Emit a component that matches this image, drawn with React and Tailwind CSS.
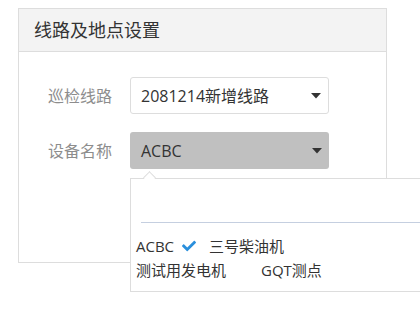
import React from "react";
import { FaCheck } from "react-icons/fa";

const font = { fontFamily: '"Open Sans", "Noto Sans CJK SC", sans-serif' };

const Caret = () => (
  <svg width="10" height="6" viewBox="0 0 10 6" className="shrink-0">
    <path d="M0 0 L10 0 L5 5.5 Z" fill="#333" />
  </svg>
);

const devices = [
  [
    { name: "ACBC", checked: true },
    { name: "三号柴油机", checked: false },
  ],
  [
    { name: "测试用发电机", checked: false },
    { name: "GQT测点", checked: false },
  ],
];

export default function App() {
  return (
    <div className="w-[420px] h-[315px] bg-white overflow-hidden relative" style={font}>
      <div className="ml-[18px] mt-[8px] w-[369px] h-[255px] border border-[#ddd]">
        {/* header */}
        <div className="h-[43px] bg-[#f3f3f3] border-b border-[#ddd] pl-[15px] flex items-center text-[18px] text-[#333]">
          线路及地点设置
        </div>

        {/* form */}
        <div className="pt-[25px] flex flex-col gap-[18px]">
          <div className="flex items-center">
            <div className="w-[111px] pr-[18px] text-right text-[16px] text-[#8d8d8d]">巡检线路</div>
            <div className="w-[199px] h-[37px] border border-[#ddd] rounded-[3px] bg-white flex items-center justify-between pl-[10px] pr-[7px] text-[16px] text-[#333]">
              <span>2081214新增线路</span>
              <Caret />
            </div>
          </div>

          <div className="flex items-center">
            <div className="w-[111px] pr-[18px] text-right text-[16px] text-[#8d8d8d]">设备名称</div>
            <div className="relative">
              <div className="w-[199px] h-[37px] rounded-[3px] bg-[#c0c0c0] flex items-center justify-between pl-[11px] pr-[7px] text-[16px] text-[#333]">
                <span>ACBC</span>
                <Caret />
              </div>

              {/* dropdown popover */}
              <div className="absolute left-0 top-[46px] w-[300px] h-[114px] bg-white border border-[#ddd] z-10">
                <div className="absolute left-[14px] -top-[6px] w-[9px] h-[9px] bg-white border-l border-t border-[#ddd] rotate-45" />
                <div className="ml-[10px] h-[44px] border-b border-[#c5cfe0]" />
                <div className="pt-[11px] pl-[5px] text-[15px] text-[#333] leading-[24px]">
                  {devices.map((row, i) => (
                    <div key={i} className="flex">
                      {row.map((d) => (
                        <div key={d.name} className="flex items-center mr-[13px]">
                          <span>{d.name}</span>
                          <span className="ml-[8px] w-[14px] flex items-center">
                            {d.checked && <FaCheck className="text-[#2a8fdc]" size={14} />}
                          </span>
                        </div>
                      ))}
                    </div>
                  ))}
                </div>
              </div>
            </div>
          </div>
        </div>
      </div>
    </div>
  );
}
